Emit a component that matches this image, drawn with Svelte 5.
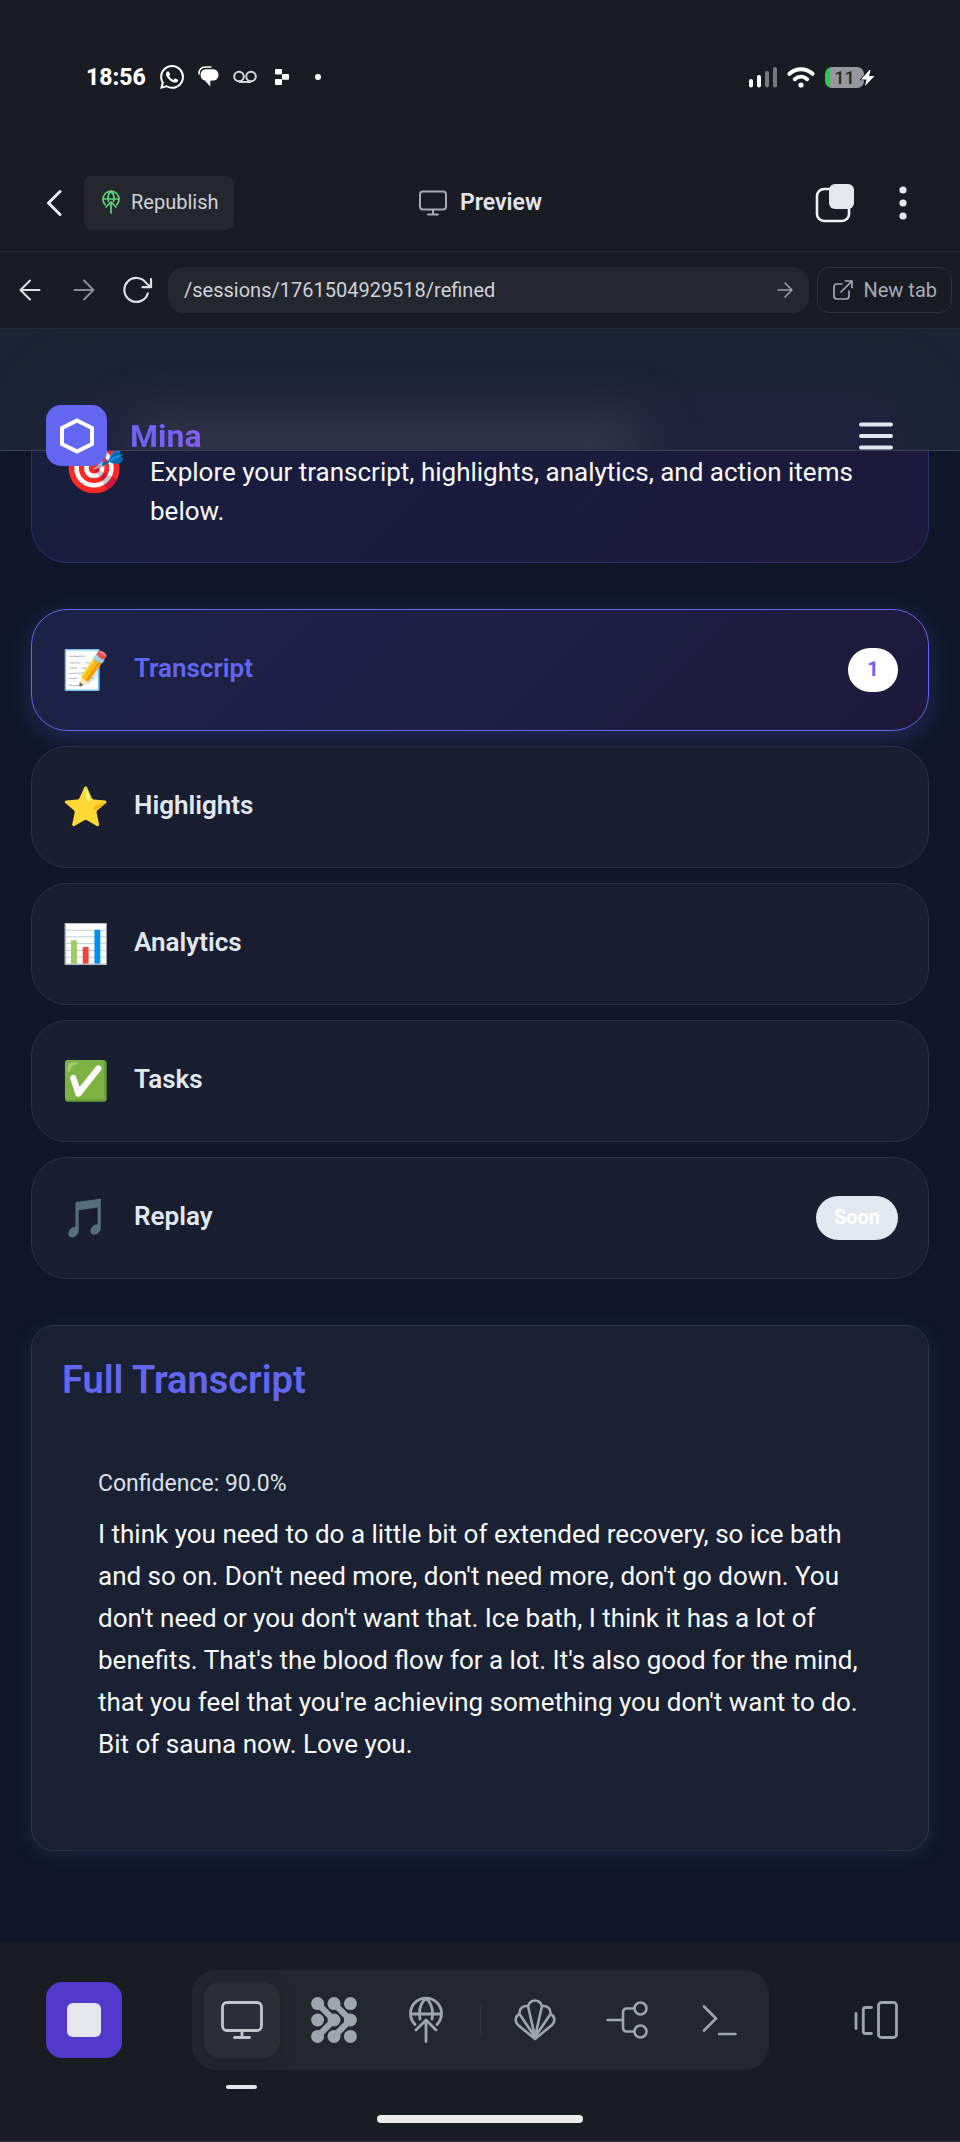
<script>
  const tabs = [
    { icon: '📝', label: 'Transcript', badge: '1' },
    { icon: '⭐', label: 'Highlights' },
    { icon: '📊', label: 'Analytics' },
    { icon: '✅', label: 'Tasks' },
    { icon: '🎵', label: 'Replay', badge: 'Soon' }
  ];
  let active = $state('Transcript');
  let url = $state('/sessions/1761504929518/refined');
</script>

<div class="screen">
  <div class="status">
    <div class="status-left">
      <time>18:56</time>
      <svg width="24" height="24" viewBox="0 0 24 24" fill="#fff"><path d="M17.472 14.382c-.297-.149-1.758-.867-2.03-.967-.273-.099-.471-.148-.67.15-.197.297-.767.966-.94 1.164-.173.199-.347.223-.644.075-.297-.15-1.255-.463-2.39-1.475-.883-.788-1.48-1.761-1.653-2.059-.173-.297-.018-.458.13-.606.134-.133.298-.347.446-.52.149-.174.198-.298.298-.497.099-.198.05-.371-.025-.52-.075-.149-.669-1.612-.916-2.207-.242-.579-.487-.5-.669-.51-.173-.008-.371-.01-.57-.01-.198 0-.52.074-.792.372-.272.297-1.04 1.016-1.04 2.479 0 1.462 1.065 2.875 1.213 3.074.149.198 2.096 3.2 5.077 4.487.709.306 1.262.489 1.694.625.712.227 1.36.195 1.871.118.571-.085 1.758-.719 2.006-1.413.248-.694.248-1.289.173-1.413-.074-.124-.272-.198-.57-.347m-5.421 7.403h-.004a9.87 9.87 0 01-5.031-1.378l-.361-.214-3.741.982.998-3.648-.235-.374a9.86 9.86 0 01-1.51-5.26c.001-5.45 4.436-9.884 9.888-9.884 2.64 0 5.122 1.03 6.988 2.898a9.825 9.825 0 012.893 6.994c-.003 5.45-4.437 9.884-9.885 9.884m8.413-18.297A11.815 11.815 0 0012.05 0C5.495 0 .16 5.335.157 11.892c0 2.096.547 4.142 1.588 5.945L.057 24l6.305-1.654a11.882 11.882 0 005.683 1.448h.005c6.554 0 11.89-5.335 11.893-11.893a11.821 11.821 0 00-3.48-8.413Z" /></svg>
      <svg width="21" height="22" viewBox="0 0 21 22"><path d="M1 8C1 3.500 3.500 1 7.500 1H13" fill="none" stroke="#fff" stroke-width="1.500" stroke-linecap="round" /><path d="M8.500 3.200H14.500C18.300 3.200 20.500 5.600 20.500 9C20.500 12.200 18.300 14.600 14.600 14.600L12.300 14.800V20.500L6.800 14.600C4 13.900 2.600 11.800 2.600 9C2.600 5.600 4.700 3.200 8.500 3.200Z" fill="#fff" /></svg>
      <svg width="24" height="14" viewBox="0 0 24 14" fill="none" stroke="#d6d7da" stroke-width="2"><circle cx="6" cy="6.500" r="4.800" /><circle cx="18" cy="6.500" r="4.800" /><path d="M6 12H18" /></svg>
      <svg class="blocks" width="14" height="16" viewBox="0 0 14 16" fill="#fff"><rect x="0" y="0" width="7" height="5.500" rx="1" /><rect x="7" y="5" width="7" height="5.700" rx="1" /><rect x="0" y="10" width="7" height="6" rx="1" /></svg>
      <svg class="dot" width="6" height="6" viewBox="0 0 6 6"><circle cx="3" cy="3" r="3" fill="#fff" /></svg>
    </div>
    <div class="status-right">
      <svg width="28" height="21" viewBox="0 0 28 21"><rect x="0" y="12" width="4" height="8.500" rx="2" fill="#fff" /><rect x="8" y="8" width="4" height="12.500" rx="2" fill="#fff" /><rect x="16" y="4" width="4" height="16.500" rx="2" fill="#77797e" /><rect x="24" y="0" width="4" height="20.500" rx="2" fill="#77797e" /></svg>
      <svg width="28" height="21" viewBox="0 0 28 21" fill="none" stroke="#fff" stroke-width="4" stroke-linecap="round"><path d="M2.500 6.800C9.300 0.700 18.700 0.700 25.500 6.800" /><path d="M7.800 12.200C11.500 9 16.500 9 20.200 12.200" /><circle cx="14" cy="18" r="2.600" fill="#fff" stroke="none" /></svg>
      <div class="battery"><span>11</span>
        <svg width="16" height="18" viewBox="0 0 16 18"><path d="M9.500 1L1 10.500H6.500L5 17L14.500 7H9L10.500 1Z" fill="#fff" stroke="#1a1c24" stroke-width="1.500" paint-order="stroke" /></svg>
      </div>
    </div>
  </div>

  <header class="app-bar">
    <div class="side">
      <button class="plain" aria-label="Back"><svg width="16" height="28" viewBox="0 0 16 28" fill="none" stroke="#e8e9ee" stroke-width="3" stroke-linecap="round" stroke-linejoin="round"><path d="M14 2.500L2.500 14L14 25.500" /></svg></button>
      <button class="republish">
        <svg width="18" height="24" viewBox="0 0 36 48" fill="none" stroke="#5fd47a" stroke-width="3.400" stroke-linecap="round" stroke-linejoin="round"><path d="M6.500 29.500A16 16 0 1 1 29.500 29.500M2 18H34M13 23C11 13 13.500 6 18 2C22.500 6 25 13 23 23M8 34L18 24L28 34M18 25V46" /></svg>
        Republish
      </button>
    </div>
    <h1>
      <svg width="30" height="26" viewBox="0 0 30 26" fill="none" stroke="#a9abb5" stroke-width="2" stroke-linecap="round"><rect x="2" y="1.500" width="26" height="18" rx="3" /><path d="M15 20V24.500M10 24.500H20" /></svg>
      Preview
    </h1>
    <div class="side end">
      <button class="plain" aria-label="Windows"><svg width="40" height="40" viewBox="0 0 40 40"><rect x="2" y="6" width="32" height="32" rx="7" fill="none" stroke="#f0f1f4" stroke-width="2.600" /><rect x="14" y="1" width="25" height="25" rx="6" fill="#e6e7ed" /></svg></button>
      <button class="plain" aria-label="More"><svg width="8" height="34" viewBox="0 0 8 34" fill="#e6e7ed"><circle cx="4" cy="4" r="3.600" /><circle cx="4" cy="17" r="3.600" /><circle cx="4" cy="30" r="3.600" /></svg></button>
    </div>
  </header>

  <form class="nav-bar" onsubmit={(e) => e.preventDefault()}>
    <button type="button" class="plain step" aria-label="Previous page"><svg width="22" height="22" viewBox="0 0 22 22" fill="none" stroke="#dfe1e7" stroke-width="2" stroke-linecap="round" stroke-linejoin="round"><path d="M20.500 11H2M11 1.500L1.500 11L11 20.500" /></svg></button>
    <button type="button" class="plain step" aria-label="Next page"><svg width="22" height="22" viewBox="0 0 22 22" fill="none" stroke="#8a8d99" stroke-width="2" stroke-linecap="round" stroke-linejoin="round"><path d="M1.500 11H20M11 1.500L20.500 11L11 20.500" /></svg></button>
    <button type="button" class="plain" aria-label="Reload"><svg width="30" height="28" viewBox="0 0 30 28" fill="none" stroke="#dfe1e7" stroke-width="2.200" stroke-linecap="round" stroke-linejoin="round"><path d="M24.800 17.500A12 12 0 1 1 23.500 7.500L28 11M28 3V11.200H19.500" /></svg></button>
    <div class="url">
      <input aria-label="Page address" bind:value={url} />
      <button class="plain" aria-label="Go"><svg width="16" height="16" viewBox="0 0 16 16" fill="none" stroke="#9a9ca8" stroke-width="1.600" stroke-linecap="round" stroke-linejoin="round"><path d="M1 8H15M8 1L15 8L8 15" /></svg></button>
    </div>
    <button type="button" class="new-tab"><svg width="20" height="20" viewBox="0 0 20 20" fill="none" stroke="#a5a7b1" stroke-width="1.700" stroke-linecap="round" stroke-linejoin="round"><path d="M9 4H4C2.300 4 1 5.300 1 7V16C1 17.700 2.300 19 4 19H13C14.700 19 16 17.700 16 16V11M8 12L19 1M12.500 1H19V7.500" /></svg>New tab</button>
  </form>

  <div class="site">
    <div class="site-header">
      <div class="frost"></div>
      <a class="brand" href="#home">
        <span class="logo"><svg width="36" height="36" viewBox="0 0 36 36" fill="none" stroke="#fff" stroke-width="4"><path d="M18 2.500L33 10V26L18 33.500L3 26V10Z" /></svg></span>
        <span class="name">Mina</span>
      </a>
      <button class="plain" aria-label="Menu"><svg width="34" height="28" viewBox="0 0 34 28" stroke="#e2e8f0" stroke-width="4" stroke-linecap="round"><path d="M2 2.500H32M2 14H32M2 25.500H32" /></svg></button>
    </div>

    <main>
      <section class="hero">
        <span class="hero-icon">🎯</span>
        <p>Explore your transcript, highlights, analytics, and action items below.</p>
      </section>

      <div class="tabs">
        {#each tabs as tab}
          <button class="tab" class:active={active === tab.label} onclick={() => (active = tab.label)}>
            <span class="emoji">{tab.icon}</span>
            <span class="label">{tab.label}</span>
            {#if tab.badge}<span class="badge">{tab.badge}</span>{/if}
          </button>
        {/each}
      </div>

      <section class="panel">
        <h2>Full Transcript</h2>
        <article>
          <p class="confidence">Confidence: 90.0%</p>
          <p>I think you need to do a little bit of extended recovery, so ice bath and so on. Don't need more, don't need more, don't go down. You don't need or you don't want that. Ice bath, I think it has a lot of benefits. That's the blood flow for a lot. It's also good for the mind, that you feel that you're achieving something you don't want to do. Bit of sauna now. Love you.</p>
        </article>
      </section>
    </main>
  </div>

  <footer>
    <div class="tools">
      <button class="stop" aria-label="Stop"><span></span></button>
      <nav class="dock">
        <button class="tool current" aria-label="Preview"><svg width="42" height="38" viewBox="0 0 42 38" fill="none" stroke="#c3c5cd" stroke-width="2.800" stroke-linecap="round"><rect x="1.500" y="1.500" width="39" height="28" rx="4.500" /><path d="M21 30V36.500M13.500 36.500H28.500" /></svg></button>
        <button class="tool" aria-label="Agents"><svg width="46" height="46" viewBox="0 0 46 46" fill="#a0a4af"><circle cx="6.600" cy="6.600" r="6.500" /><circle cx="23" cy="6.600" r="6.500" /><circle cx="39.400" cy="6.600" r="6.500" /><circle cx="6.600" cy="23" r="6.500" /><circle cx="23" cy="23" r="6.500" /><circle cx="39.400" cy="23" r="6.500" /><circle cx="6.600" cy="39.400" r="6.500" /><circle cx="23" cy="39.400" r="6.500" /><circle cx="39.400" cy="39.400" r="6.500" /><path d="M6.600 6.600L23 23L6.600 39.400M23 6.600L39.400 23L23 39.400" fill="none" stroke="#a0a4af" stroke-width="6.200" /></svg></button>
        <button class="tool" aria-label="Publish"><svg width="36" height="48" viewBox="0 0 36 48" fill="none" stroke="#a0a4af" stroke-width="2.800" stroke-linecap="round" stroke-linejoin="round"><path d="M7 28.500A15.500 15.500 0 1 1 29 28.500M2.500 18H33.500M12 23C10.500 14 13 6.500 18 2.500C23 6.500 25.500 14 24 23M8 34L18 24L28 34M18 25V45.500" /></svg></button>
        <i></i>
        <button class="tool" aria-label="Shell"><svg width="42" height="42" viewBox="0 0 42 42" fill="none" stroke="#a0a4af" stroke-width="2.600" stroke-linecap="round" stroke-linejoin="round"><path d="M21 40L4 26C0.500 22 0.800 17.500 5.500 15C5 9.500 8.500 6.500 14 7C15.500 3 18 1.500 21 1.500C24 1.500 26.500 3 28 7C33.500 6.500 37 9.500 36.500 15C41.200 17.500 41.500 22 38 26ZM21 38L5.500 15M21 38L14 7M21 38L28 7M21 38L36.500 15" /></svg></button>
        <button class="tool" aria-label="Git"><svg width="42" height="38" viewBox="0 0 42 38" fill="none" stroke="#a0a4af" stroke-width="2.600" stroke-linecap="round"><circle cx="34.500" cy="7.500" r="6" /><circle cx="34.500" cy="30.500" r="6" /><path d="M28 7.500H21C18.500 7.500 17 9 17 11.500V26.500C17 29 18.500 30.500 21 30.500H28M1.500 19H17" /></svg></button>
        <button class="tool" aria-label="Console"><svg width="36" height="32" viewBox="0 0 36 32" fill="none" stroke="#a0a4af" stroke-width="2.600" stroke-linecap="round" stroke-linejoin="round"><path d="M3 2.500L15 14.500L3 26.500M18 30H34.500" /></svg></button>
      </nav>
      <button class="tool" aria-label="Panels"><svg width="44" height="38" viewBox="0 0 44 38" fill="none" stroke="#a0a4af" stroke-width="2.800" stroke-linecap="round"><rect x="24.500" y="1.500" width="18" height="35" rx="3" /><path d="M17.500 6.500H11.500C10 6.500 9.300 7.300 9.300 8.500V30.500C9.300 31.700 10 32.500 11.500 32.500H17.500M2 12.500V27.500" /></svg></button>
    </div>
    <div class="home"></div>
  </footer>
</div>

<style>
  :global(body) { margin: 0; background: #1a1c24; }
  * { box-sizing: border-box; }
  svg { display: block; flex: none; }
  button { font: inherit; color: inherit; border: 0; cursor: pointer; }
  p, h1, h2 { margin: 0; }
  .screen { font-family: Roboto, "Noto Sans", sans-serif; background: #1a1c24; color: #fff; }
  .plain { background: none; padding: 0; }

  .status { display: flex; justify-content: space-between; align-items: center; height: 154px; padding: 0 86px; }
  .status-left { display: flex; align-items: center; gap: 14px; }
  .status-left .blocks { margin-left: 4px; }
  .status-left .dot { margin-left: 12px; }
  time { font-size: 23px; font-weight: 800; }
  .status-right { display: flex; align-items: center; gap: 10px; }
  .battery { position: relative; width: 39px; height: 21px; margin-right: 10px; border-radius: 7px; background: linear-gradient(90deg, #27cc4b 5px, #96989d 5px); color: #2c2d31; font-size: 18px; font-weight: 600; line-height: 22px; text-align: center; }
  .battery svg { position: absolute; right: -12px; top: 2px; }

  .app-bar { display: grid; grid-template-columns: 1fr auto 1fr; align-items: center; height: 98px; padding: 0 46px; border-bottom: 1px solid #262833; }
  .side { display: flex; align-items: center; gap: 22px; }
  .end { justify-content: flex-end; gap: 44px; padding-right: 7px; }
  .republish { display: flex; align-items: center; gap: 11px; height: 54px; padding: 0 16px 2px 18px; border-radius: 8px; background: #25272f; color: #cfd1d8; font-size: 20px; }
  h1 { display: flex; align-items: center; gap: 12px; font-size: 23px; font-weight: 600; color: #e3e4e9; }

  .nav-bar { display: flex; align-items: center; height: 77px; padding: 0 8px 0 19px; border-bottom: 1px solid #262833; }
  .step { margin-right: 32px; }
  .step + .step { margin-right: 28px; }
  .url { flex: 1; display: flex; align-items: center; min-width: 0; height: 46px; margin: 0 8px 0 15px; padding: 0 16px; border-radius: 16px; background: #25272f; }
  input { flex: 1; min-width: 0; padding: 0; border: 0; background: none; outline: 0; font-family: inherit; font-size: 20px; color: #cfd1d8; }
  .new-tab { display: flex; align-items: center; gap: 10px; height: 46px; padding: 0 14px 0 15px; border: 1px solid #2e303b; border-radius: 12px; background: none; color: #a9abb5; font-size: 20px; }

  .site { position: relative; background: #0f1729; }
  .site-header { position: absolute; z-index: 1; inset: 0 0 auto; display: flex; justify-content: space-between; height: 122px; padding: 76px 67px 0 46px; }
  .frost { position: absolute; inset: 0; overflow: hidden; border-bottom: 1px solid #3a4153; background: #1a2434; }
  .frost::before { content: ""; position: absolute; inset: 56px 50px -60px; background: #1f233d; filter: blur(24px); }
  .frost::after { content: ""; position: absolute; left: 14%; right: 33%; top: 86px; height: 60px; background: #303648; filter: blur(24px); }
  .brand { position: relative; display: flex; align-items: center; gap: 23px; height: 61px; text-decoration: none; }
  .logo { display: grid; place-items: center; width: 61px; height: 61px; border-radius: 15px; background: #6366f1; }
  .name { font-size: 32px; font-weight: 700; background: linear-gradient(90deg, #6c63f3, #865cf6); background-clip: text; color: transparent; }
  .site-header .plain { position: relative; height: 62px; }

  main { padding: 32px 31px 92px; }
  .hero { display: flex; align-items: flex-end; gap: 26px; height: 202px; padding: 0 31px 31px; border: 1px solid #2b2f6c; border-radius: 36px; background: linear-gradient(135deg, #181f3f, #1d193b); }
  .hero-icon { width: 61px; font-size: 50px; line-height: 126px; white-space: nowrap; }
  .hero p { flex: 1; font-size: 26px; line-height: 39px; color: #f8fafc; }

  .tabs { display: flex; flex-direction: column; gap: 15px; margin-top: 46px; }
  .tab { display: flex; align-items: center; height: 122px; padding: 0 30px; border: 1px solid #2a3142; border-radius: 36px; background: #191e30; color: #e2e8f0; text-align: left; }
  .tab.active { border-color: #6366f1; background: linear-gradient(135deg, #1b2347, #1e1f43 50%, #1d193b); color: #6366f1; box-shadow: 0 6px 24px rgba(99, 102, 241, 0.25); }
  .emoji { width: 72px; font-size: 38px; line-height: 44px; white-space: nowrap; }
  .label { flex: 1; padding-bottom: 4px; font-size: 26px; font-weight: 600; }
  .badge { min-width: 50px; height: 44px; padding: 0 18px; border-radius: 22px; background: #e2e8f0; color: #fff; font-size: 20px; font-weight: 700; line-height: 42px; text-align: center; }
  .active .badge { background: #fff; color: #6366f1; }

  .panel { margin-top: 46px; padding: 30px 30px 85px; border: 1px solid #2b3243; border-radius: 23px; background: #1a2133; box-shadow: 0 4px 16px rgba(45, 55, 80, 0.5); }
  h2 { font-size: 38px; font-weight: 600; line-height: 48px; color: #6366f1; }
  article { padding: 64px 36px 0; font-size: 26px; line-height: 42px; color: #f8fafc; }
  .confidence { margin-bottom: 13px; font-size: 23px; line-height: 32px; color: #d9e0ea; }

  footer { padding: 27px 46px 18px; border-bottom: 1px solid #33353d; }
  .tools { display: flex; align-items: center; justify-content: space-between; }
  .stop { display: grid; place-items: center; width: 76px; height: 76px; border-radius: 16px; background: #5339cb; }
  .stop span { width: 34px; height: 34px; border-radius: 6px; background: #e6e7ed; }
  .dock { display: flex; align-items: center; gap: 16px; padding: 12px; border-radius: 24px; background: #25272f; }
  .dock i { width: 1px; height: 30px; background: #363842; }
  .tool { display: grid; place-items: center; width: 76px; height: 76px; padding: 0; border-radius: 16px; background: none; }
  .current { position: relative; background: #2b2d38; box-shadow: 0 4px 16px rgba(20, 21, 28, 0.4); }
  .current::after { content: ""; position: absolute; bottom: -31px; width: 31px; height: 4px; border-radius: 2px; background: #e6e7ed; }
  .home { width: 206px; height: 8px; margin: 45px auto 0; border-radius: 4px; background: #ececec; }
</style>
